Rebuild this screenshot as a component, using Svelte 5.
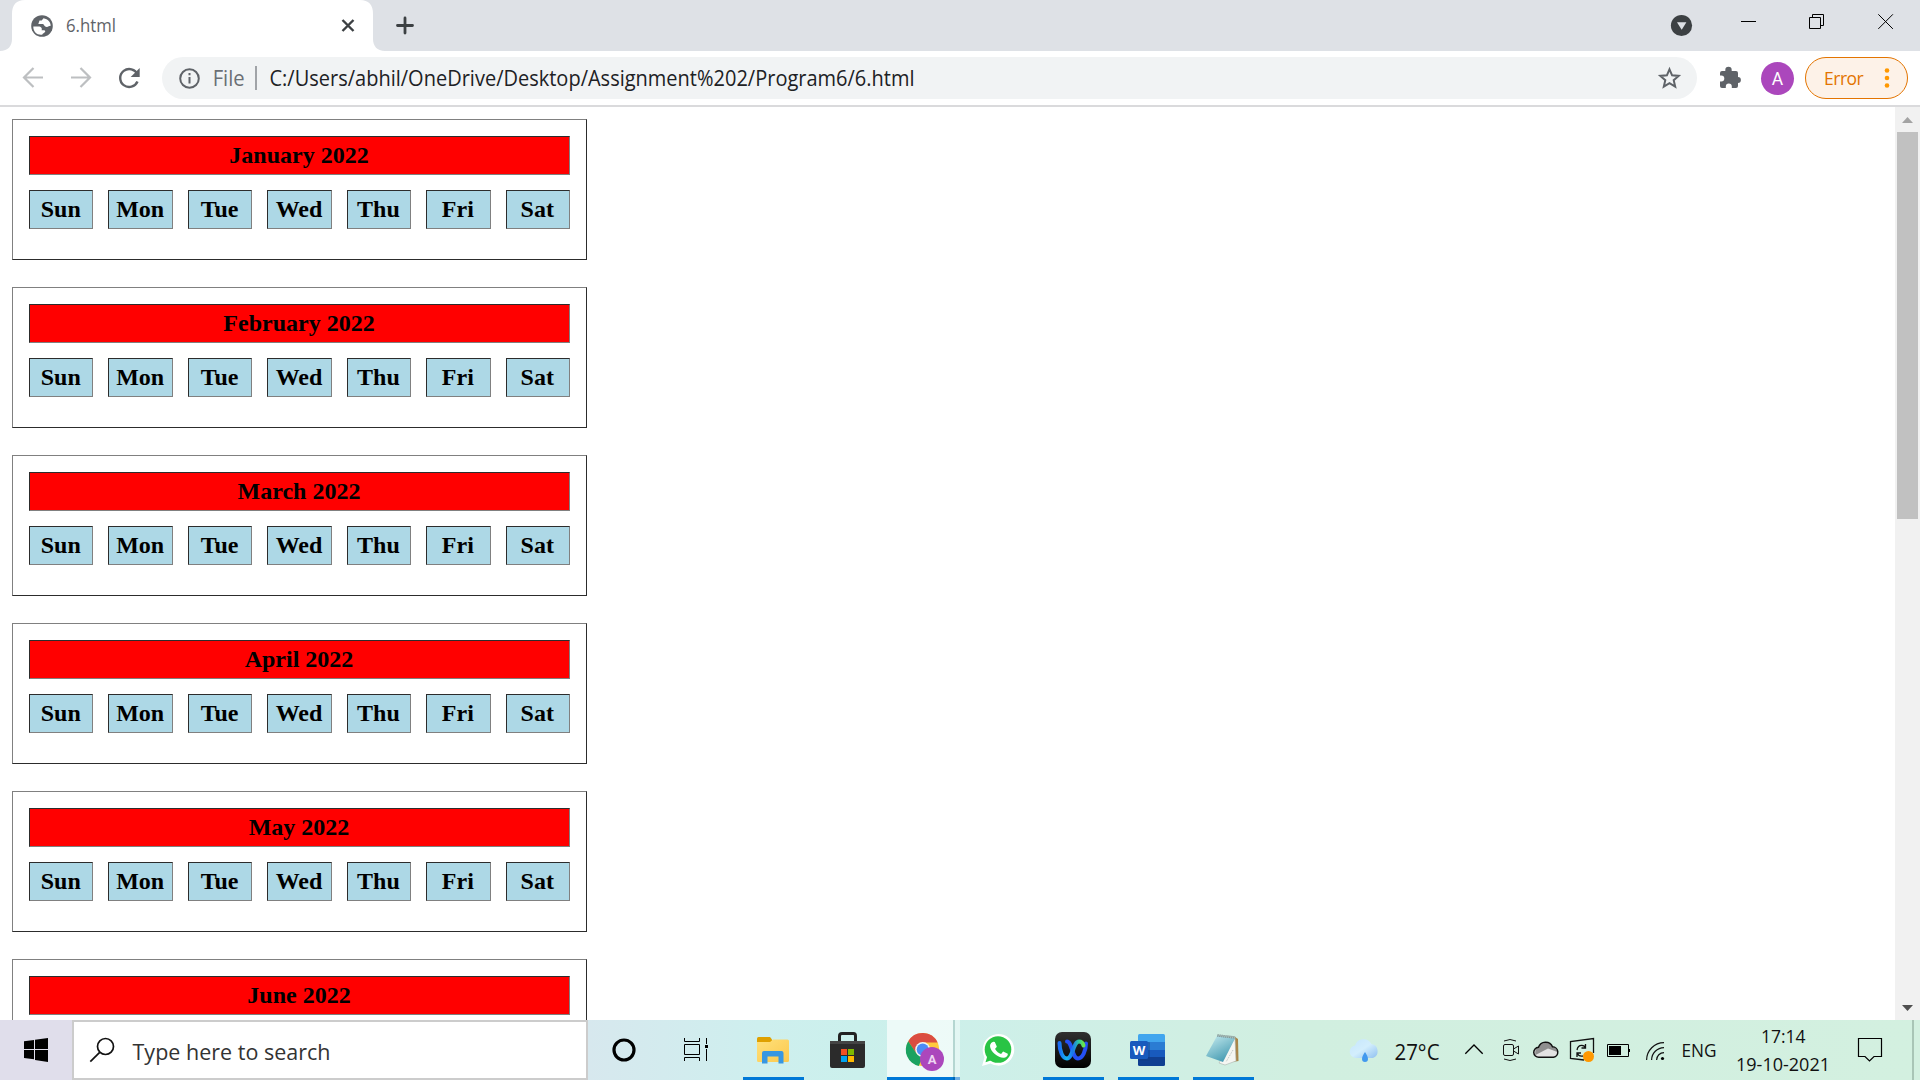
<script>
  const months = ['January', 'February', 'March', 'April', 'May', 'June'];
  const days = ['Sun', 'Mon', 'Tue', 'Wed', 'Thu', 'Fri', 'Sat'];
</script>

<div class="screen">
  <div class="tabs">
    <svg class="tab-shape" width="480" height="51" viewBox="0 0 480 51">
      <path fill="#fff" d="M0 51C8 51 12 46 12 39V14Q12 0 25 0H360Q373 0 373 14V39C373 46 377 51 385 51Z" />
      <circle cx="42" cy="26" r="10.8" fill="#5f6368" />
      <path fill="#fff" d="M33.3 26.5h4.8c3.4 0 4.2 2.1 3.5 3.8h2.3c1.9 0 1.7 1.6.3 2.5l-1.7 1.1v.7c-5 1-9.400-2.600-9.200-8.100zM43.500 18.300l-1.800 2.300h-2.200l-1.200 3.500h4.400c1.400 0 1.600 2.900 4 2.900 1.900 0 2-1.200 4-1.200-.1-3.500-2.700-6.700-7.200-7.500z" />
      <path stroke="#3c4043" stroke-width="2.4" fill="none" d="M342.500 20l11 11m0-11l-11 11" />
      <path stroke="#3c4043" stroke-width="2.8" stroke-linecap="round" fill="none" d="M397.500 25.500h15M405 18v15" />
      <text x="66" y="32" class="ui" font-size="18" fill="#5f6368" textLength="50" lengthAdjust="spacingAndGlyphs">6.html</text>
    </svg>
    <svg width="270" height="51" viewBox="1650 0 270 51">
      <circle cx="1681.500" cy="25.500" r="10.600" fill="#3c4043" />
      <path fill="#dee1e6" d="M1677 22.300h9.400l-4.700 7.500z" />
      <path stroke="#000" fill="none" d="M1741 21.500h15M1809.500 17.500h11v11h-11zM1812.500 17v-2.500h11v11h-3M1878.300 14.300l14.600 14.600m0-14.600l-14.600 14.600" />
    </svg>
  </div>

  <div class="toolbar">
    <svg width="162" height="54" viewBox="0 51 162 54" fill="none">
      <path stroke="#bdbfc1" stroke-width="2.200" d="M43 77.500H25M33.500 68l-9.500 9.500 9.500 9.500M71 77.500h18M80.500 68l9.500 9.500-9.500 9.500" />
      <path stroke="#5f6368" stroke-width="2.400" d="M137.500 74.500A9 9 0 1 0 137.500 81.500" />
      <path fill="#5f6368" d="M139.700 68v9h-9z" />
    </svg>
    <div class="omnibox">
      <svg width="52" height="42" viewBox="162 57 52 42" fill="none">
        <circle cx="189.500" cy="78.500" r="9.300" stroke="#5f6368" stroke-width="2" />
        <path stroke="#5f6368" stroke-width="2" d="M189.500 77v6.500M189.500 73v2.200" />
      </svg>
      <svg width="720" height="42" viewBox="214 57 720 42">
        <text x="212.700" y="86" class="ui" font-size="21" fill="#6b6f74" textLength="32" lengthAdjust="spacingAndGlyphs">File</text>
        <path fill="#a0a3a7" d="M255 66h2v24h-2z" />
        <text x="269.500" y="86" class="ui" font-size="21" fill="#202124" textLength="645" lengthAdjust="spacingAndGlyphs">C:/Users/abhil/OneDrive/Desktop/Assignment%202/Program6/6.html</text>
      </svg>
      <svg class="star" width="57" height="42" viewBox="1640 57 57 42">
        <path fill="none" stroke="#5f6368" stroke-width="2" d="M1669.500 69.300l2.600 6 6.600.6-5 4.300 1.500 6.400-5.700-3.400-5.700 3.400 1.500-6.400-5-4.300 6.600-.6z" />
      </svg>
    </div>
    <svg width="108" height="54" viewBox="1697 51 108 54">
      <path fill="#5f6368" d="M1720 73q0-2 2-2h3.300v-1a3.200 3.200 0 0 1 6.400 0v1h4.300q2 0 2 2v4.100a2.900 2.900 0 0 1 0 5.800V86q0 2-2 2h-4.200v-1.500a3 3 0 0 0-6 0V88h-3.800q-2 0-2-2v-4.500h1.300a3 3 0 0 0 0-6h-1.300z" />
      <circle cx="1777.500" cy="78.500" r="16.500" fill="#ab47bc" />
      <text x="1777.500" y="85" text-anchor="middle" class="roboto" font-size="17.500" fill="#fff">A</text>
    </svg>
    <div class="error">
      <span>Error</span>
      <svg width="6" height="24" viewBox="0 0 6 24" fill="#ff9800"><circle cx="3" cy="4.500" r="2.300" /><circle cx="3" cy="12" r="2.300" /><circle cx="3" cy="19.500" r="2.300" /></svg>
    </div>
  </div>

  <div class="page">
    <main>
      {#each months as month, i}
        <section class="month">
          <div class="title">{month} 2022</div>
          {#if i < 5}
            <div class="days">
              {#each days as day}<div class="day">{day}</div>{/each}
            </div>
          {/if}
        </section>
      {/each}
    </main>
    <div class="scrollbar">
      <svg width="25" height="25" viewBox="0 0 25 25"><path fill="#a3a3a3" d="M7 16l5.500-6 5.500 6z" /></svg>
      <div class="thumb"></div>
      <svg class="down" width="25" height="25" viewBox="0 0 25 25"><path fill="#505050" d="M7 10h11l-5.500 6z" /></svg>
    </div>
  </div>

  <div class="taskbar">
    <svg class="start" width="72" height="60" viewBox="0 1020 72 60">
      <path d="M24 1041.300l10-1.400v9.100H24zM35 1039.700l13-1.800v11.100H35zM24 1050h10v9.300l-10-1.300zM35 1050h13v12l-13-1.900z" />
    </svg>
    <div class="search">
      <svg width="512" height="56" viewBox="74 1022 512 56">
        <circle cx="105.500" cy="1046.500" r="8" fill="none" stroke="#111" stroke-width="1.700" />
        <path stroke="#111" stroke-width="1.700" d="M99.700 1052.300l-9.400 9.400" />
        <text x="132.500" y="1060" class="ui" font-size="22" fill="#333" textLength="198" lengthAdjust="spacingAndGlyphs">Type here to search</text>
      </svg>
    </div>
    <svg width="72" height="60" viewBox="588 1020 72 60"><circle cx="624" cy="1050" r="10" fill="none" stroke="#000" stroke-width="3.200" /></svg>
    <svg width="76" height="60" viewBox="660 1020 76 60">
      <path stroke="#000" fill="none" d="M684.500 1038v3.500h15V1038M684.500 1044.500h15v10h-15zM684.500 1061v-3.500h15v3.500M706.500 1038v6M706.500 1049v12" />
      <path d="M705 1045h3v3h-3z" />
    </svg>
    <svg class="running" width="75" height="60" viewBox="736 1020 75 60">
      <defs>
        <linearGradient id="folder" x2="1" y2="1"><stop stop-color="#ffe07b" /><stop offset="1" stop-color="#fbc94d" /></linearGradient>
      </defs>
      <path fill="#dfa000" d="M757 1038.500q0-1.500 1.500-1.500H770l2 2.500v3h-15z" />
      <path fill="url(#folder)" d="M757 1042h13l3-2.500h14.500q1.500 0 1.500 1.500v19.500q0 1.500-1.500 1.500h-29q-1.500 0-1.500-1.500z" />
      <path fill="#3797e2" d="M762 1053q0-2 2-2h17.500q2 0 2 2v10.500h-5v-7h-11v7H762z" />
      <path fill="#0078d7" d="M743 1077h61v3h-61z" />
    </svg>
    <svg width="75" height="60" viewBox="811 1020 75 60">
      <path fill="none" stroke="#222" stroke-width="3" d="M839.500 1043v-7q0-2.500 2.500-2.500h11.500q2 0 2 2.500v7" />
      <path fill="#2b2b2b" d="M830 1041h35v25q0 2-2 2h-31q-2 0-2-2z" /><path fill="#444" d="M830 1041h35v3h-35z" />
      <path fill="#f25022" d="M841 1049h6v6h-6z" /><path fill="#7fba00" d="M848 1049h6v6h-6z" />
      <path fill="#00a4ef" d="M841 1056h6v6h-6z" /><path fill="#ffb900" d="M848 1056h6v6h-6z" />
    </svg>
    <svg width="75" height="60" viewBox="886 1020 75 60">
      <path fill="#fff" opacity=".65" d="M887 1020h66v60h-66z" /><path fill="#b5d6d1" d="M953 1020h2v60h-2z" /><path fill="#fff" opacity=".45" d="M955 1020h5v60h-5z" />
      <circle cx="922.700" cy="1049.500" r="16.500" fill="#ffc93e" />
      <path fill="#db4d41" d="M908.200 1041.300A16.600 16.600 0 0 1 937.700 1042.500H922L916 1053z" />
      <path fill="#1aa260" d="M908.200 1041.300l8.300 12.200 6.200 3.500-4 9A16.500 16.500 0 0 1 908.200 1041.300z" />
      <circle cx="922.700" cy="1049.500" r="7.500" fill="#f1f5f5" /><circle cx="922.700" cy="1049.500" r="6" fill="#4c8bf5" />
      <circle cx="932" cy="1059" r="12" fill="#ab47bc" /><text x="932" y="1064" text-anchor="middle" class="roboto" font-size="13" font-weight="700" fill="#eed5f2">A</text>
      <path fill="#0078d7" d="M887 1077h66v3h-66z" /><path fill="#0067b7" d="M953 1077h2v3h-2z" /><path fill="#70afe4" d="M955 1077h5v3h-5z" />
    </svg>
    <svg width="75" height="60" viewBox="961 1020 75 60">
      <path fill="#fff" d="M982 1066l2.500-8.700A15.800 15.800 0 1 1 990.500 1063.500z" />
      <circle cx="998" cy="1049.500" r="13.300" fill="#29c445" /><path fill="#29c445" d="M985.500 1062.300l1.800-6 4 4z" />
      <path fill="#fff" d="M990 1046c0-2 2-4.300 3.500-4.200l1.300.2 2 4.600c-.3 1-1.200 1.700-1.700 2.300 1.500 2.800 3.600 4.200 6 5.100l2-2.500 4.700 2.300c.4 1.600-1.300 3.600-3.600 4-5 .8-14-6-14.200-11.800z" />
    </svg>
    <svg width="75" height="60" viewBox="1036 1020 75 60" fill="none">
      <defs>
        <linearGradient id="wxa" x2="1"><stop stop-color="#1b6df5" /><stop offset=".3" stop-color="#15b9f0" /><stop offset=".55" stop-color="#1b73f0" /><stop offset=".8" stop-color="#2dc7a0" /><stop offset="1" stop-color="#69e34c" /></linearGradient>
        <linearGradient id="wxbg" x2="0" y2="1"><stop stop-color="#303030" /><stop offset="1" stop-color="#000" /></linearGradient>
      </defs>
      <rect x="1055" y="1032" width="36" height="36" rx="7" fill="url(#wxbg)" />
      <path stroke="#2450f5" stroke-width="4" stroke-linecap="round" d="M1067 1041.500c5 0 5 17 11 17 4.500 0 8-8 8-15" />
      <path stroke="url(#wxa)" stroke-width="4" stroke-linecap="round" d="M1059.500 1043c0 8 3 15.500 7.500 15.500 6 0 6-17 12-17q3.500 0 4.500 4" />
      <path fill="#0078d7" d="M1043 1077h61v3h-61z" />
    </svg>
    <svg width="75" height="60" viewBox="1111 1020 75 60">
      <path fill="#41a5ee" d="M1138 1043v-7.500q0-1.500 1.500-1.500h24q1.500 0 1.500 1.500v7.500z" /><path fill="#2b7cd3" d="M1138 1042h27v8h-27z" />
      <path fill="#185abd" d="M1138 1050h27v7h-27z" /><path fill="#103f91" d="M1138 1057h27v7.500q0 1.500-1.500 1.500h-24q-1.500 0-1.500-1.500z" />
      <rect x="1138" y="1042" width="12" height="19" rx="1" fill="#123d83" opacity=".4" />
      <rect x="1130" y="1041" width="18" height="18" rx="1.500" fill="#185abd" />
      <text x="1139" y="1054.500" text-anchor="middle" class="ui" font-size="13" font-weight="700" fill="#fff">W</text>
      <path fill="#0078d7" d="M1118 1077h61v3h-61z" />
    </svg>
    <svg width="75" height="60" viewBox="1186 1020 75 60">
      <defs><linearGradient id="pad" x2=".6" y2="1"><stop stop-color="#c9edf0" /><stop offset="1" stop-color="#459bb2" /></linearGradient></defs>
      <path fill="#a98548" d="M1235 1037l3 2 .5 22-6 1z" /><path fill="#f5f6f2" stroke="#a9b4ae" stroke-width=".6" d="M1235 1038l1 23-11 4-6-2z" />
      <path fill="url(#pad)" d="M1217 1036l18 2.500-12 23.500-17-6z" />
      <path stroke="#657176" stroke-width="2.500" stroke-dasharray="1 1" d="M1217.500 1035.500l18 2" />
      <path stroke="#b5bfbb" stroke-width="1" stroke-dasharray="1 1" d="M1233 1050l-7 12" />
      <path fill="#0078d7" d="M1193 1077h61v3h-61z" />
    </svg>
    <svg class="tray" width="659" height="60" viewBox="1261 1020 659 60" fill="none">
      <defs>
        <linearGradient id="rain" x2="1" y2="1"><stop stop-color="#c5e6fd" /><stop offset=".5" stop-color="#d3eefd" /><stop offset="1" stop-color="#8fc0f0" /></linearGradient>
      </defs>
      <path fill="url(#rain)" d="M1355.500 1058a6.300 6.300 0 0 1-.5-12.500 9 9 0 0 1 16.500-1.500 7.300 7.300 0 0 1 1.500 14z" />
      <path fill="#4299ee" d="M1365 1052c1.500 2.500 3 4.500 3 7a3 3 0 0 1-6 0c0-2.500 1.500-4.500 3-7z" />
      <text x="1394.500" y="1060" class="ui" font-size="22" fill="#111" textLength="45" lengthAdjust="spacingAndGlyphs">27°C</text>
      <path stroke="#000" stroke-width="1.300" d="M1465.300 1053.700l8.700-8.700 8.700 8.700" />
      <g stroke="#111">
        <rect x="1503.500" y="1044.500" width="10" height="11" rx="1.500" />
        <path d="M1513.500 1049l5-3v8l-5-3M1504 1041q6-3 12 0M1504 1059q6 3 12 0" />
      </g>
      <path fill="#e3e3e3" d="M1539 1057.500a5 5 0 0 1-.5-10 7.500 7.500 0 0 1 14-.5 5.300 5.300 0 0 1 1 10.500z" />
      <path fill="#8f8f8f" d="M1535.500 1055c-1-4 1-7.500 3.500-7.500a7.500 7.500 0 0 1 13.500-.5q4.500 1 5 5l-9.500-3.500z" />
      <path stroke="#111" stroke-width="1.500" d="M1539 1057.300a5 5 0 0 1-.5-10 7.500 7.500 0 0 1 14-.5 5.300 5.300 0 0 1 1 10.500z" />
      <path stroke="#111" stroke-width="1.300" d="M1584 1060l-13.500-1.500v-17l23-3V1053M1577 1050q1-5 5.500-4.500 2 0 3 2.500m0-4v4h-4M1577 1057v-4h4m-4 0q2 4 6 3" />
      <circle cx="1588.500" cy="1056.500" r="5.500" fill="#ff9800" />
      <path stroke="#000" d="M1607.500 1044.500h21v12h-21z" /><path fill="#000" d="M1609 1046h12v9h-12zM1629 1049h1v3h-1z" />
      <path stroke="#111" stroke-width="1.200" d="M1646.600 1060a17.500 17.500 0 0 1 17.400-17.400M1651.600 1060a12.500 12.500 0 0 1 12.400-12.400M1656.600 1060a7.500 7.500 0 0 1 7.400-7.400" />
      <circle cx="1662.500" cy="1058.500" r="1.600" fill="#000" />
      <g class="ui" font-size="18" fill="#111">
        <text x="1681.500" y="1057" textLength="35" lengthAdjust="spacingAndGlyphs">ENG</text>
        <text x="1761" y="1043" textLength="44.500" lengthAdjust="spacingAndGlyphs">17:14</text>
        <text x="1736" y="1071" textLength="94" lengthAdjust="spacingAndGlyphs">19-10-2021</text>
      </g>
      <path stroke="#000" stroke-width="1.200" d="M1858.500 1038.500h23v18h-7.500l-4.500 4.500-4.500-4.500h-6.500z" />
      <path fill="#a9c5b6" d="M1912 1020h2v60h-2z" />
    </svg>
  </div>
</div>

<style>
  :global(body) { margin: 0; overflow: hidden; }
  .screen { width: 1920px; height: 1080px; display: flex; flex-direction: column; background: #fff; overflow: hidden; }
  svg { display: block; flex: none; }
  .ui { font-family: "Open Sans", "Noto Sans", sans-serif; }
  .roboto { font-family: Roboto, sans-serif; }
  .tabs { height: 51px; flex: none; display: flex; justify-content: space-between; background: #dee1e6; }
  .toolbar { height: 54px; flex: none; display: flex; align-items: center; border-bottom: 2px solid #dadadc; }
  .omnibox { width: 1535px; height: 42px; display: flex; border-radius: 21px; background: #f1f3f4; }
  .star { margin-left: auto; }
  .error { box-sizing: border-box; width: 103px; height: 42px; padding: 0 17px 0 18px; display: flex; align-items: center; justify-content: space-between; border: 1.500px solid #e37400; border-radius: 21px; background: #fdf2e8; color: #e37400; font: 17.500px "Open Sans", sans-serif; letter-spacing: -.5px; }
  .page { height: 913px; flex: none; display: flex; justify-content: space-between; overflow: hidden; }
  main { display: flex; flex-direction: column; gap: 27px; padding: 12px; }
  .month { box-sizing: border-box; width: 575px; height: 141px; flex: none; padding: 16px; border: 1px solid; border-color: #808080 #2c2c2c #2c2c2c #808080; font: bold 24px/37px "Liberation Serif", serif; text-align: center; color: #000; }
  .title, .day { height: 37px; padding-right: 1px; border: 1px solid; border-color: #2c2c2c #808080 #808080 #2c2c2c; }
  .title { background: #f00; }
  .days { margin-top: 15px; display: grid; grid-template-columns: repeat(7, 1fr); gap: 15px; }
  .day { background: #add8e6; }
  .scrollbar { width: 25px; display: flex; flex-direction: column; align-items: center; background: #f1f1f1; }
  .thumb { width: 21px; height: 387px; background: #c1c1c1; }
  .down { margin-top: auto; }
  .taskbar { height: 60px; flex: none; display: flex; background: linear-gradient(90deg, #e0deeb 0, #e0deeb 72px, #d7e8ee 588px, #ceefee 760px, #cbf0ec 860px, #cfefe6 1080px, #d1efe0 1300px, #d3f0e0 1920px); }
  .search { box-sizing: border-box; width: 516px; flex: none; border: 2px solid #ccc; background: #fff; overflow: hidden; }
</style>
